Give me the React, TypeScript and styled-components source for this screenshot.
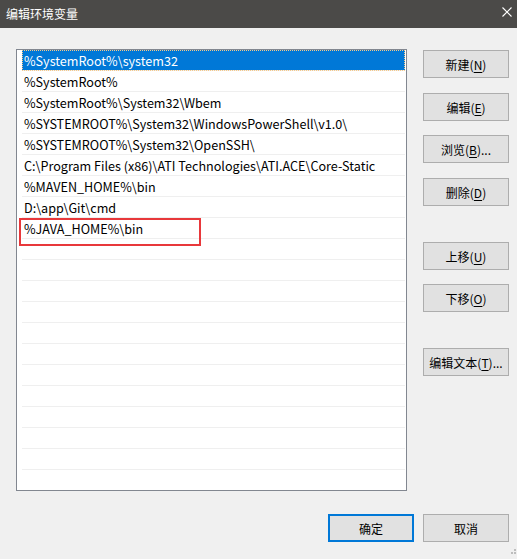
import React from "react";
import styled, { createGlobalStyle } from "styled-components";

const Global = createGlobalStyle`
  html, body { margin: 0; padding: 0; background: #f0f0f0; }
  body { font-family: "Noto Sans CJK SC", "Noto Sans", sans-serif; }
`;

const Window = styled.div`
  position: relative;
  width: 517px;
  height: 559px;
  background: #f0f0f0;
  display: flex;
  flex-direction: column;
  overflow: hidden;
`;

const TitleBar = styled.div`
  height: 28px;
  background: #4b4a48;
  display: flex;
  align-items: center;
  justify-content: space-between;
  padding: 0 4px 0 6px;
  color: #ffffff;
  font-size: 12px;
  line-height: 1;
`;

const Title = styled.span`
  padding-top: 0px;
`;

const CloseBtn = styled.div`
  width: 10px;
  height: 10px;
  margin-right: 1px;
  margin-top: -4px;
  display: flex;
`;

const Body = styled.div`
  display: flex;
  gap: 16px;
  padding: 21px 8px 0 16px;
`;

const ListBox = styled.div`
  width: 392px;
  height: 442px;
  box-sizing: border-box;
  border: 1px solid #828790;
  background: #ffffff;
  padding: 0 1px 0 5px;
  overflow: hidden;
  display: flex;
  flex-direction: column;
`;

const Row = styled.div<{ $selected?: boolean }>`
  flex: none;
  height: 21px;
  box-sizing: border-box;
  border-bottom: 1px solid #efefef;
  padding: 0 0 0 2px;
  display: flex;
  align-items: center;
  font-size: 12.6px;
  color: ${(p) => (p.$selected ? "#ffffff" : "#000000")};
  background: ${(p) => (p.$selected ? "#0078d7" : "transparent")};
  outline: ${(p) => (p.$selected ? "1px dotted #f5c98a" : "none")};
  outline-offset: -1px;
  white-space: nowrap;
`;

const ButtonColumn = styled.div`
  display: flex;
  flex-direction: column;
  width: 86px;
  padding-top: 1px;
`;

const Button = styled.div<{ $space?: number; $primary?: boolean }>`
  width: 86px;
  height: 28px;
  box-sizing: border-box;
  margin-top: ${(p) => p.$space ?? 0}px;
  background: #e1e1e1;
  border: ${(p) => (p.$primary ? "2px solid #0078d7" : "1px solid #adadad")};
  display: flex;
  align-items: center;
  justify-content: center;
  font-size: 12px;
  color: #000000;
  white-space: nowrap;
`;

const U = styled.span`
  text-decoration: underline;
  text-underline-offset: 2px;
`;

const Footer = styled.div`
  display: flex;
  justify-content: flex-end;
  gap: 9px;
  padding: 0 8px 0 0;
  margin-top: 23px;
`;

const Annotation = styled.div`
  position: absolute;
  left: 19px;
  top: 218px;
  width: 182px;
  height: 28px;
  box-sizing: border-box;
  border: 2px solid #e8383b;
  pointer-events: none;
`;

const Grip = styled.svg`
  position: absolute;
  right: 0;
  bottom: 2px;
`;

const items = [
  "%SystemRoot%\\system32",
  "%SystemRoot%",
  "%SystemRoot%\\System32\\Wbem",
  "%SYSTEMROOT%\\System32\\WindowsPowerShell\\v1.0\\",
  "%SYSTEMROOT%\\System32\\OpenSSH\\",
  "C:\\Program Files (x86)\\ATI Technologies\\ATI.ACE\\Core-Static",
  "%MAVEN_HOME%\\bin",
  "D:\\app\\Git\\cmd",
  "%JAVA_HOME%\\bin",
];

const TOTAL_ROWS = 21;

export default function App() {
  const rows: string[] = [];
  for (let i = 0; i < TOTAL_ROWS; i++) rows.push(items[i] ?? "");
  return (
    <Window>
      <Global />
      <TitleBar>
        <Title>编辑环境变量</Title>
        <CloseBtn>
          <svg width="10" height="10" viewBox="0 0 10 10">
            <path d="M0.5 0.5 L9.5 9.5 M9.5 0.5 L0.5 9.5" stroke="#ffffff" strokeWidth="1.1" fill="none" />
          </svg>
        </CloseBtn>
      </TitleBar>
      <Body>
        <ListBox>
          {rows.map((t, i) => (
            <Row key={i} $selected={i === 0}>
              {t}
            </Row>
          ))}
        </ListBox>
        <ButtonColumn>
          <Button>新建(<U>N</U>)</Button>
          <Button $space={15}>编辑(<U>E</U>)</Button>
          <Button $space={14}>浏览(<U>B</U>)...</Button>
          <Button $space={15}>删除(<U>D</U>)</Button>
          <Button $space={36}>上移(<U>U</U>)</Button>
          <Button $space={14}>下移(<U>O</U>)</Button>
          <Button $space={36}>编辑文本(<U>T</U>)...</Button>
        </ButtonColumn>
      </Body>
      <Footer>
        <Button $primary>确定</Button>
        <Button>取消</Button>
      </Footer>
      <Annotation />
      <Grip width="8" height="8" viewBox="0 0 8 8">
        <rect x="5" y="0" width="2" height="2" fill="#bdbdbd" />
        <rect x="2" y="3" width="2" height="2" fill="#bdbdbd" />
        <rect x="5" y="3" width="2" height="2" fill="#bdbdbd" />
      </Grip>
    </Window>
  );
}
